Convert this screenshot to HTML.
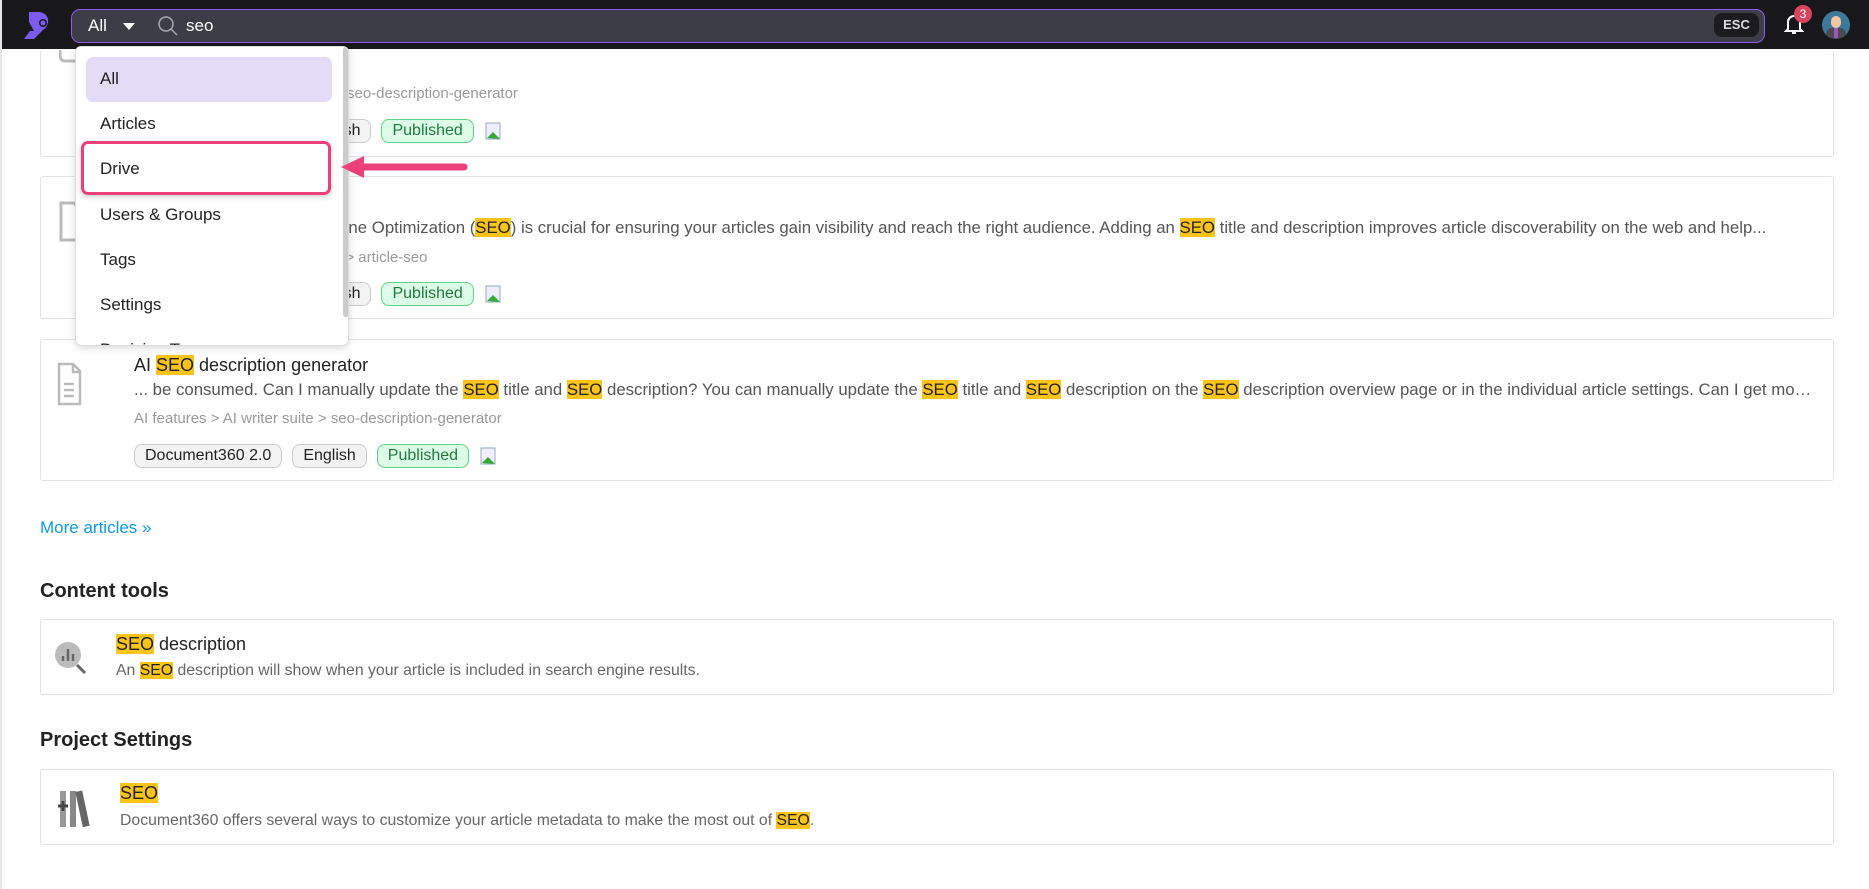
<!DOCTYPE html>
<html><head><meta charset="utf-8"><style>
*{box-sizing:border-box;margin:0;padding:0}
body{width:1869px;height:889px;overflow:hidden;background:#fff;font-family:"Liberation Sans",sans-serif;color:#222;position:relative;border-left:2px solid #e5e5e5}
.top{position:absolute;left:0;top:0;width:1869px;height:49px;background:#18181b}
.search{position:absolute;left:69px;top:9px;width:1694px;height:34px;background:#3d3d47;border:1.5px solid #8b5cf6;border-radius:9px}
.abs{position:absolute}
.hl{background:#fcc419;color:#222}
.card{position:absolute;left:38px;width:1794px;border:1px solid #e3e3e3;border-radius:3px;background:#fff}
.t{position:absolute;white-space:nowrap}
.title{font-size:18px;color:#222}
.desc{font-size:16.8px;color:#555;width:1680px;overflow:hidden;text-overflow:ellipsis}
.path{font-size:15px;color:#999}
.tags{position:absolute;display:flex;gap:10px;align-items:center}
.tag{height:24px;border:1px solid #ccc;background:#f3f3f3;border-radius:8px;font-size:16px;line-height:22px;padding:0 10px;color:#222;white-space:nowrap}
.pub{border-color:#5fd28a;background:#dcfce7;color:#1f7a3d}
h2{position:absolute;left:38px;font-size:20px;font-weight:bold;color:#222}
.dd{position:absolute;left:73px;top:46px;width:274px;height:300px;background:#fff;border:1px solid #ddd;border-radius:6px;box-shadow:0 2px 8px rgba(0,0,0,.15);overflow:hidden}
.it{position:absolute;left:24px;font-size:17px;color:#222}
.sd{font-size:15.8px;color:#666}
</style></head><body>
<div class="top">
 <svg class="abs" style="left:20px;top:9px" width="32" height="32" viewBox="0 0 32 32"><path d="M5 3h11c7 0 11 5 10 11-1 3-3 6-5 7l-9 9H2l6-8h4l-5-9V3z" fill="#7c5cf0"/><circle cx="21" cy="14" r="4" fill="#18181b"/><circle cx="21" cy="14" r="2.5" fill="#7c5cf0"/></svg>
 <div class="search">
  <span class="t" style="left:16px;top:6px;font-size:17px;color:#fff">All</span>
  <svg class="abs" style="left:50px;top:12px" width="14" height="9"><path d="M1 1h12L7 8z" fill="#fff"/></svg>
  <svg class="abs" style="left:85px;top:5px" width="22" height="22" viewBox="0 0 22 22"><circle cx="9" cy="9" r="7" fill="none" stroke="#aaa" stroke-width="1.5"/><path d="M14 14l6 6" stroke="#aaa" stroke-width="1.5"/></svg>
  <span class="t" style="left:114px;top:6px;font-size:17px;color:#fff">seo</span>
  <div class="abs" style="left:1642px;top:3px;width:45px;height:24px;background:#1c1c20;border-radius:8px;color:#ddd;font-size:13px;font-weight:bold;text-align:center;line-height:24px">ESC</div>
 </div>
 <svg class="abs" style="left:1782px;top:13px" width="20" height="22" viewBox="0 0 20 22"><path d="M4 16V9a6 6 0 0 1 12 0v7l2 2H2z" fill="none" stroke="#fff" stroke-width="2"/><path d="M8 20h4" stroke="#fff" stroke-width="2"/></svg>
 <div class="abs" style="left:1792px;top:5px;width:18px;height:18px;border-radius:50%;background:#d9455f;color:#fff;font-size:12px;text-align:center;line-height:18px">3</div>
 <div class="abs" style="left:1820px;top:11px;width:28px;height:28px;border-radius:50%;background:#3d7a99;overflow:hidden"><div class="abs" style="left:9px;top:5px;width:10px;height:12px;border-radius:5px;background:#f2c7a5"></div><div class="abs" style="left:4px;top:17px;width:20px;height:14px;border-radius:6px 6px 0 0;background:#4a4a55"></div><div class="abs" style="left:12px;top:17px;width:4px;height:10px;background:#a259b5"></div></div>
</div>

<div class="card" style="top:50px;height:107px;border-top:none">
 <svg class="abs" style="left:18px;top:0" width="24" height="14"><path d="M1 0v6a5 5 0 0 0 5 5h16" fill="none" stroke="#bbb" stroke-width="3"/></svg>
 <span class="t path" style="left:306px;top:35px">seo-description-generator</span>
 <div class="tags" style="left:256px;top:69px"><div class="tag">English</div><div class="tag pub">Published</div><svg width="20" height="20"><rect x="2" y="2" width="14" height="16" fill="#eef" stroke="#9ab" /><path d="M3 17l6-6 7 7z" fill="#3a3"/></svg></div>
</div>
<div class="card" style="top:176px;height:143px">
 <svg class="abs" style="left:18px;top:22px" width="24" height="44" viewBox="0 0 24 44"><path d="M2 4h13l7 7v30H2z" fill="none" stroke="#bbb" stroke-width="3"/></svg>
 <div class="t desc" style="left:93px;top:41px;text-indent:26px">Introduction: Search Engine Optimization (<span class="hl">SEO</span>) is crucial for ensuring your articles gain visibility and reach the right audience. Adding an <span class="hl">SEO</span> title and description improves article discoverability on the web and help...</div>
 <span class="t path" style="left:93px;top:72px">Document360 &gt; Article settings &gt; article-seo</span>
 <div class="tags" style="left:256px;top:105px"><div class="tag">English</div><div class="tag pub">Published</div><svg width="20" height="20"><rect x="2" y="2" width="14" height="16" fill="#eef" stroke="#9ab" /><path d="M3 17l6-6 7 7z" fill="#3a3"/></svg></div>
</div>
<div class="card" style="top:339px;height:142px">
 <svg class="abs" style="left:15px;top:21px" width="26" height="46" viewBox="0 0 26 46"><path d="M3 3h14l7 7v33H3z M17 3v8h7" fill="none" stroke="#bbb" stroke-width="2.5" stroke-linejoin="round"/><path d="M8 23h10M8 29h10M8 35h10" stroke="#bbb" stroke-width="2.5"/></svg>
 <span class="t title" style="left:93px;top:15px">AI <span class="hl">SEO</span> description generator</span>
 <div class="t desc" style="left:93px;top:40px">... be consumed. Can I manually update the <span class="hl">SEO</span> title and <span class="hl">SEO</span> description? You can manually update the <span class="hl">SEO</span> title and <span class="hl">SEO</span> description on the <span class="hl">SEO</span> description overview page or in the individual article settings. Can I get more information about the SEO</div>
 <span class="t path" style="left:93px;top:70px">AI features &gt; AI writer suite &gt; seo-description-generator</span>
 <div class="tags" style="left:93px;top:104px"><div class="tag">Document360 2.0</div><div class="tag">English</div><div class="tag pub">Published</div><svg width="20" height="20"><rect x="2" y="2" width="14" height="16" fill="#eef" stroke="#9ab" /><path d="M3 17l6-6 7 7z" fill="#3a3"/></svg></div>
</div>

<span class="t" style="left:38px;top:518px;font-size:17px;color:#0b9be8">More articles »</span>
<h2 style="top:580px">Content tools</h2>
<div class="card" style="top:619px;height:76px">
 <svg class="abs" style="left:12px;top:20px" width="36" height="36" viewBox="0 0 36 36"><circle cx="15" cy="15" r="13" fill="#bbb"/><path d="M10 21v-5M15 21V9M20 21v-7" stroke="#666" stroke-width="2.5"/><path d="M24 25l8 8" stroke="#666" stroke-width="3"/></svg>
 <span class="t title" style="left:75px;top:14px"><span class="hl">SEO</span> description</span>
 <span class="t sd" style="left:75px;top:42px">An <span class="hl">SEO</span> description will show when your article is included in search engine results.</span>
</div>
<h2 style="top:729px">Project Settings</h2>
<div class="card" style="top:769px;height:76px">
 <svg class="abs" style="left:16px;top:19px" width="40" height="40" viewBox="0 0 40 40"><rect x="3" y="2" width="6" height="36" fill="#999"/><rect x="13" y="2" width="6" height="36" fill="#888"/><rect x="22" y="2" width="7" height="36" fill="#666" transform="rotate(-12 25 20)"/><path d="M1 17h10M6 12v10" stroke="#444" stroke-width="3"/></svg>
 <span class="t title" style="left:79px;top:13px"><span class="hl">SEO</span></span>
 <span class="t sd" style="left:79px;top:42px">Document360 offers several ways to customize your article metadata to make the most out of <span class="hl">SEO</span>.</span>
</div>

<div class="dd">
 <div class="abs" style="left:10px;top:10px;width:246px;height:45px;background:#e3dcf7;border-radius:7px"></div>
 <span class="t it" style="top:22px">All</span>
 <span class="t it" style="top:67px">Articles</span>
 <span class="t it" style="top:112px">Drive</span>
 <span class="t it" style="top:158px">Users &amp; Groups</span>
 <span class="t it" style="top:203px">Tags</span>
 <span class="t it" style="top:248px">Settings</span>
 <span class="t it" style="top:293px">Decision Tree</span>
 <div class="abs" style="left:267px;top:0;width:6px;height:270px;background:#ccc;border-radius:3px"></div>
</div>
<div class="abs" style="left:79px;top:141px;width:250px;height:54px;border:3px solid #ec407a;border-radius:7px;box-shadow:0 2px 6px rgba(0,0,0,.2)"></div>
<svg class="abs" style="left:336px;top:153px" width="132" height="30" viewBox="0 0 132 30"><path d="M22 14h104" stroke="#ec407a" stroke-width="7" stroke-linecap="round"/><path d="M3 14L26 3v22z" fill="#ec407a"/></svg>
</body></html>
